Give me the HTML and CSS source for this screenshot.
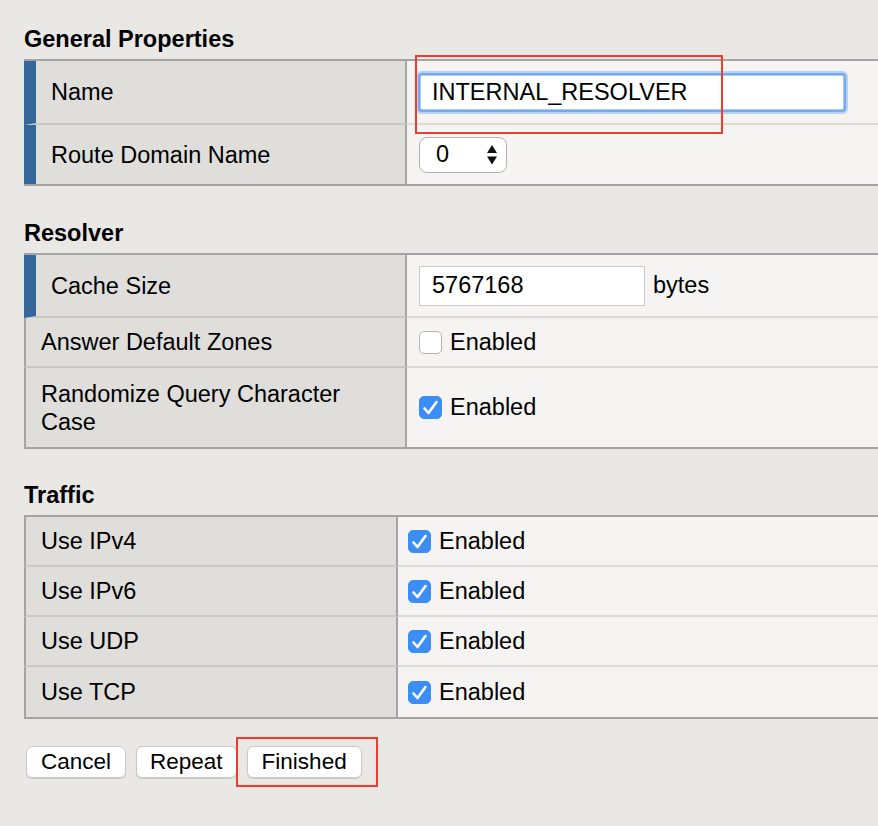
FILE: index.html
```html
<!DOCTYPE html>
<html>
<head>
<meta charset="utf-8">
<title>Resolver</title>
<link rel="stylesheet" href="styles.css">
</head>
<body>
<div class="page">
  <h2 class="section-title first">General Properties</h2>
  <div class="props">
    <div class="row row-64">
      <div class="label required">Name</div>
      <div class="value value-annot">
        <input class="text text-focus" type="text" value="INTERNAL_RESOLVER">
        <div class="annot annot-name"></div>
      </div>
    </div>
    <div class="row row-59">
      <div class="label required">Route Domain Name</div>
      <div class="value">
        <div class="select">
          <span class="select-val">0</span>
          <svg class="select-arrows" width="12" height="22" viewBox="0 0 12 22">
            <path d="M6 1 L11 9 L1 9 Z" fill="#111"/>
            <path d="M1 12.5 L11 12.5 L6 20.5 Z" fill="#111"/>
          </svg>
        </div>
      </div>
    </div>
  </div>

  <h2 class="section-title">Resolver</h2>
  <div class="props">
    <div class="row row-63">
      <div class="label required">Cache Size</div>
      <div class="value">
        <input class="text text-cache" type="text" value="5767168">
        <span class="unit">bytes</span>
      </div>
    </div>
    <div class="row row-50">
      <div class="label">Answer Default Zones</div>
      <div class="value">
        <span class="cb"></span><span class="cb-label">Enabled</span>
      </div>
    </div>
    <div class="row row-79">
      <div class="label">Randomize Query Character Case</div>
      <div class="value">
        <span class="cb on"><svg width="21" height="21" viewBox="1 1 21 21"><path d="M5.5 12.5 L9.5 17 L17.5 6" fill="none" stroke="#fff" stroke-width="2.6" stroke-linecap="round" stroke-linejoin="round"/></svg></span><span class="cb-label">Enabled</span>
      </div>
    </div>
  </div>

  <h2 class="section-title traffic">Traffic</h2>
  <div class="props props-narrow">
    <div class="row row-50">
      <div class="label">Use IPv4</div>
      <div class="value">
        <span class="cb on"><svg width="21" height="21" viewBox="1 1 21 21"><path d="M5.5 12.5 L9.5 17 L17.5 6" fill="none" stroke="#fff" stroke-width="2.6" stroke-linecap="round" stroke-linejoin="round"/></svg></span><span class="cb-label">Enabled</span>
      </div>
    </div>
    <div class="row row-50">
      <div class="label">Use IPv6</div>
      <div class="value">
        <span class="cb on"><svg width="21" height="21" viewBox="1 1 21 21"><path d="M5.5 12.5 L9.5 17 L17.5 6" fill="none" stroke="#fff" stroke-width="2.6" stroke-linecap="round" stroke-linejoin="round"/></svg></span><span class="cb-label">Enabled</span>
      </div>
    </div>
    <div class="row row-50">
      <div class="label">Use UDP</div>
      <div class="value">
        <span class="cb on"><svg width="21" height="21" viewBox="1 1 21 21"><path d="M5.5 12.5 L9.5 17 L17.5 6" fill="none" stroke="#fff" stroke-width="2.6" stroke-linecap="round" stroke-linejoin="round"/></svg></span><span class="cb-label">Enabled</span>
      </div>
    </div>
    <div class="row row-50">
      <div class="label">Use TCP</div>
      <div class="value">
        <span class="cb on"><svg width="21" height="21" viewBox="1 1 21 21"><path d="M5.5 12.5 L9.5 17 L17.5 6" fill="none" stroke="#fff" stroke-width="2.6" stroke-linecap="round" stroke-linejoin="round"/></svg></span><span class="cb-label">Enabled</span>
      </div>
    </div>
  </div>

  <div class="actions">
    <button class="btn" type="button">Cancel</button>
    <button class="btn btn-tight" type="button">Repeat</button>
    <div class="btn-wrap">
      <button class="btn" type="button">Finished</button>
      <div class="annot annot-finish"></div>
    </div>
  </div>
</div>
</body>
</html>
```
FILE: styles.css
```css
html, body {
  margin: 0;
  padding: 0;
}
body {
  background: #e9e8e5;
  font-family: "Liberation Sans", Arial, Helvetica, sans-serif;
  color: #000;
}
.page {
  padding: 25px 0 40px 24px;
}
.section-title {
  font-size: 23.5px;
  line-height: 28px;
  font-weight: bold;
  margin: 33px 0 6px 0;
}
.section-title.first {
  margin-top: 0;
}
.section-title.traffic {
  margin-top: 32px;
}
.props {
  border-top: 2px solid #a4a4a4;
  border-bottom: 2px solid #a4a4a4;
}
.row {
  display: grid;
  grid-template-columns: 383px 1fr;
}
.props-narrow .row {
  grid-template-columns: 374px 1fr;
}
.row-64 { height: 64px; }
.row-59 { height: 59px; }
.row-63 { height: 63px; }
.row-50 { height: 50px; }
.row-79 { height: 79px; }

.label {
  box-sizing: border-box;
  background: #dfdedb;
  border-left: 2px solid #a4a4a4;
  border-right: 2px solid #a4a4a4;
  border-bottom: 2px solid #c9c8c5;
  padding: 0 12px 0 15px;
  display: flex;
  align-items: center;
  font-size: 23.5px;
  line-height: 28px;
}
.label.required {
  border-left: 12px solid #35679b;
}
.value {
  box-sizing: border-box;
  background: #f5f4f2;
  border-bottom: 2px solid #dcdbd8;
  display: flex;
  align-items: center;
  padding-left: 12px;
  font-size: 23.5px;
}
.props-narrow .value {
  padding-left: 10px;
}
.row:last-child .label,
.row:last-child .value {
  border-bottom: none;
}
.value-annot {
  position: relative;
}

.text {
  box-sizing: border-box;
  font-family: "Liberation Sans", Arial, Helvetica, sans-serif;
  font-size: 23.5px;
  color: #000;
  background: #fff;
  outline: none;
  margin: 0;
}
.text-focus {
  width: 424px;
  height: 35px;
  margin-left: 1px;
  padding: 0 0 0 11px;
  border: 1px solid #a9cbf6;
  border-radius: 2px;
  box-shadow: 0 0 0 2px #74a9ef, 0 0 0 4px rgba(116, 169, 239, 0.45);
}
.text-cache {
  width: 226px;
  height: 40px;
  padding: 0 0 0 12px;
  border: 1px solid #cacaca;
  border-radius: 0;
}
.unit {
  margin-left: 8px;
}

.select {
  box-sizing: border-box;
  width: 88px;
  height: 36px;
  background: #fff;
  border: 1px solid #b2b2b2;
  border-radius: 8px;
  display: flex;
  align-items: center;
  justify-content: space-between;
  padding: 0 8px 0 16px;
  font-size: 23.5px;
}
.select-arrows {
  display: block;
}

.cb {
  box-sizing: border-box;
  width: 23px;
  height: 23px;
  border-radius: 5px;
  border: 1px solid #b5b5b5;
  background: #fff;
  margin-right: 8px;
  display: flex;
  align-items: center;
  justify-content: center;
  flex: none;
}
.cb.on {
  background: #3b8ef5;
  border-color: #3b8ef5;
}
.cb svg {
  display: block;
}

.actions {
  display: flex;
  align-items: flex-start;
  gap: 10px;
  margin-top: 27px;
  padding-left: 2px;
}
.btn {
  box-sizing: border-box;
  height: 32px;
  padding: 0 14px;
  background: #fff;
  border: 1px solid #c8c8c8;
  border-radius: 6px;
  box-shadow: 0 1px 1px rgba(0, 0, 0, 0.12);
  font-family: "Liberation Sans", Arial, Helvetica, sans-serif;
  font-size: 22.5px;
  color: #000;
  margin: 0;
  display: block;
}
.btn-tight {
  padding: 0 13px;
}
.btn-wrap {
  position: relative;
}

.annot {
  position: absolute;
  box-sizing: border-box;
  border: 2px solid #f03c2d;
  z-index: 2;
  pointer-events: none;
}
.annot-name {
  left: 8px;
  top: -6px;
  width: 308px;
  height: 79px;
}
.annot-finish {
  left: -11px;
  top: -9px;
  width: 142px;
  height: 50px;
}
```
